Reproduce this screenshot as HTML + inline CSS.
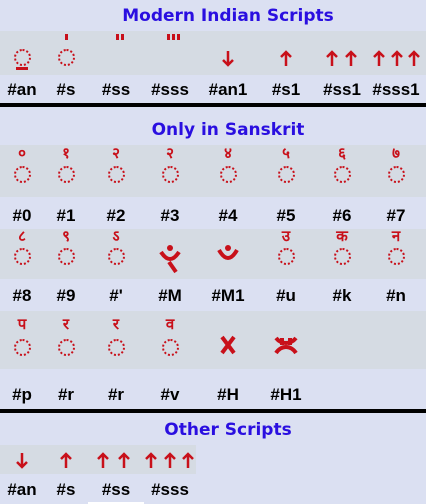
<!DOCTYPE html>
<html><head><meta charset="utf-8"><style>
body{margin:0;width:426px;height:504px;background:#dbe0f2;position:relative;overflow:hidden;font-family:"Liberation Sans","DejaVu Sans",sans-serif}
div{position:absolute}
svg{position:absolute}
.t{left:0;width:456px;text-align:center;color:#2a0fe0;font-weight:bold;font-size:17px;font-family:"DejaVu Sans",sans-serif}
.bg{background:#d5dbe3;left:0}
.bar{background:#000;left:0;width:426px;height:4px}
.l{font-weight:bold;font-size:17px;color:#000;width:60px;margin-left:-30px;text-align:center;font-family:"Liberation Sans",sans-serif}
.c{width:13px;height:13px;border:2px dotted #c8101a;border-radius:50%;margin-left:-8px}
.s{color:#c8101a;font-size:15px;width:40px;margin-left:-20px;text-align:center;font-family:"Noto Sans CJK SC","DejaVu Sans",sans-serif;font-weight:bold}
</style></head><body>
<svg width="0" height="0"><defs>
<g id="up"><path d="M6 16 L6 2 M1 7 L6 2 L11 7" stroke="#c8101a" stroke-width="2.5" fill="none"/></g>
<g id="dn"><path d="M6 1 L6 15 M1 10 L6 15 L11 10" stroke="#c8101a" stroke-width="2.5" fill="none"/></g>
</defs></svg>
<div class="t" style="top:6px">Modern Indian Scripts</div>
<div class="bg" style="top:31px;width:426px;height:44px"></div>
<div class="c" style="left:22px;top:49px"></div>
<div style="left:16px;top:67px;width:12px;height:3px;background:#c8101a"></div>
<div style="left:65px;top:34px;width:3px;height:6px;background:#c8101a"></div>
<div class="c" style="left:66px;top:49px"></div>
<div style="left:116px;top:34px;width:3px;height:6px;background:#c8101a"></div><div style="left:121px;top:34px;width:3px;height:6px;background:#c8101a"></div>
<div style="left:167px;top:34px;width:3px;height:6px;background:#c8101a"></div><div style="left:172px;top:34px;width:3px;height:6px;background:#c8101a"></div><div style="left:177px;top:34px;width:3px;height:6px;background:#c8101a"></div>
<svg style="left:222px;top:50px" width="12" height="17"><use href="#dn"/></svg>
<svg style="left:280px;top:50px" width="12" height="17"><use href="#up"/></svg>
<svg style="left:326px;top:50px" width="12" height="17"><use href="#up"/></svg><svg style="left:345px;top:50px" width="12" height="17"><use href="#up"/></svg>
<svg style="left:373px;top:50px" width="12" height="17"><use href="#up"/></svg><svg style="left:391px;top:50px" width="12" height="17"><use href="#up"/></svg><svg style="left:408px;top:50px" width="12" height="17"><use href="#up"/></svg>
<div class="l" style="left:22px;top:80px">#an</div><div class="l" style="left:66px;top:80px">#s</div><div class="l" style="left:116px;top:80px">#ss</div><div class="l" style="left:170px;top:80px">#sss</div><div class="l" style="left:228px;top:80px">#an1</div><div class="l" style="left:286px;top:80px">#s1</div><div class="l" style="left:342px;top:80px">#ss1</div><div class="l" style="left:396px;top:80px">#sss1</div>
<div class="bar" style="top:103px"></div>

<div class="t" style="top:120px">Only in Sanskrit</div>
<div class="bg" style="top:145px;width:426px;height:52px"></div>
<div class="bg" style="top:229px;width:426px;height:50px"></div>
<div class="bg" style="top:311px;width:426px;height:58px"></div>

<div class="s" style="left:22px;top:142px">०</div><div class="s" style="left:66px;top:142px">१</div><div class="s" style="left:116px;top:142px">२</div><div class="s" style="left:170px;top:142px">२</div><div class="s" style="left:228px;top:142px">४</div><div class="s" style="left:286px;top:142px">५</div><div class="s" style="left:342px;top:142px">६</div><div class="s" style="left:396px;top:142px">७</div>
<div class="c" style="left:22px;top:166px"></div><div class="c" style="left:66px;top:166px"></div><div class="c" style="left:116px;top:166px"></div><div class="c" style="left:170px;top:166px"></div><div class="c" style="left:228px;top:166px"></div><div class="c" style="left:286px;top:166px"></div><div class="c" style="left:342px;top:166px"></div><div class="c" style="left:396px;top:166px"></div>
<div class="l" style="left:22px;top:206px">#0</div><div class="l" style="left:66px;top:206px">#1</div><div class="l" style="left:116px;top:206px">#2</div><div class="l" style="left:170px;top:206px">#3</div><div class="l" style="left:228px;top:206px">#4</div><div class="l" style="left:286px;top:206px">#5</div><div class="l" style="left:342px;top:206px">#6</div><div class="l" style="left:396px;top:206px">#7</div>

<div class="s" style="left:22px;top:225px">८</div><div class="s" style="left:66px;top:225px">९</div><div class="s" style="left:116px;top:225px">ऽ</div><div class="s" style="left:286px;top:225px">उ</div><div class="s" style="left:342px;top:225px">क</div><div class="s" style="left:396px;top:225px">न</div>
<div class="c" style="left:22px;top:248px"></div><div class="c" style="left:66px;top:248px"></div><div class="c" style="left:116px;top:248px"></div><div class="c" style="left:286px;top:248px"></div><div class="c" style="left:342px;top:248px"></div><div class="c" style="left:396px;top:248px"></div>
<svg style="left:158px;top:244px" width="24" height="32"><circle cx="12" cy="4" r="3" fill="#c8101a"/><path d="M3 8 Q12 22 21 8" stroke="#c8101a" stroke-width="4" fill="none"/><path d="M11 18 L18 28" stroke="#c8101a" stroke-width="4"/></svg>
<svg style="left:216px;top:244px" width="24" height="20"><circle cx="12" cy="4" r="3" fill="#c8101a"/><path d="M3 6 Q12 22 21 6" stroke="#c8101a" stroke-width="4" fill="none"/></svg>
<div class="l" style="left:22px;top:286px">#8</div><div class="l" style="left:66px;top:286px">#9</div><div class="l" style="left:116px;top:286px">#'</div><div class="l" style="left:170px;top:286px">#M</div><div class="l" style="left:228px;top:286px">#M1</div><div class="l" style="left:286px;top:286px">#u</div><div class="l" style="left:342px;top:286px">#k</div><div class="l" style="left:396px;top:286px">#n</div>

<div class="s" style="left:22px;top:313px">प</div><div class="s" style="left:66px;top:313px">र</div><div class="s" style="left:116px;top:313px">र</div><div class="s" style="left:170px;top:313px">व</div>
<div class="c" style="left:22px;top:339px"></div><div class="c" style="left:66px;top:339px"></div><div class="c" style="left:116px;top:339px"></div><div class="c" style="left:170px;top:339px"></div>
<svg style="left:220px;top:335px" width="16" height="20"><path d="M2 2 L14 18 M14 2 L2 18" stroke="#c8101a" stroke-width="4"/></svg>
<svg style="left:274px;top:335px" width="24" height="20"><path d="M2 3 Q6 8 12 8 Q18 8 22 3 M2 18 Q6 12 12 12 Q18 12 22 18 M8 3 L8 10 M16 3 L16 10" stroke="#c8101a" stroke-width="4" fill="none"/></svg>
<div class="l" style="left:22px;top:385px">#p</div><div class="l" style="left:66px;top:385px">#r</div><div class="l" style="left:116px;top:385px">#r</div><div class="l" style="left:170px;top:385px">#v</div><div class="l" style="left:228px;top:385px">#H</div><div class="l" style="left:286px;top:385px">#H1</div>
<div class="bar" style="top:409px"></div>

<div class="t" style="top:420px">Other Scripts</div>
<div class="bg" style="top:445px;width:196px;height:29px"></div>
<svg style="left:16px;top:452px" width="12" height="17"><use href="#dn"/></svg>
<svg style="left:60px;top:452px" width="12" height="17"><use href="#up"/></svg>
<svg style="left:97px;top:452px" width="12" height="17"><use href="#up"/></svg><svg style="left:118px;top:452px" width="12" height="17"><use href="#up"/></svg>
<svg style="left:145px;top:452px" width="12" height="17"><use href="#up"/></svg><svg style="left:164px;top:452px" width="12" height="17"><use href="#up"/></svg><svg style="left:182px;top:452px" width="12" height="17"><use href="#up"/></svg>
<div class="l" style="left:22px;top:480px">#an</div><div class="l" style="left:66px;top:480px">#s</div><div class="l" style="left:116px;top:480px">#ss</div><div class="l" style="left:170px;top:480px">#sss</div>
<div style="left:88px;top:502px;width:56px;height:2px;background:#fff"></div>
</body></html>
